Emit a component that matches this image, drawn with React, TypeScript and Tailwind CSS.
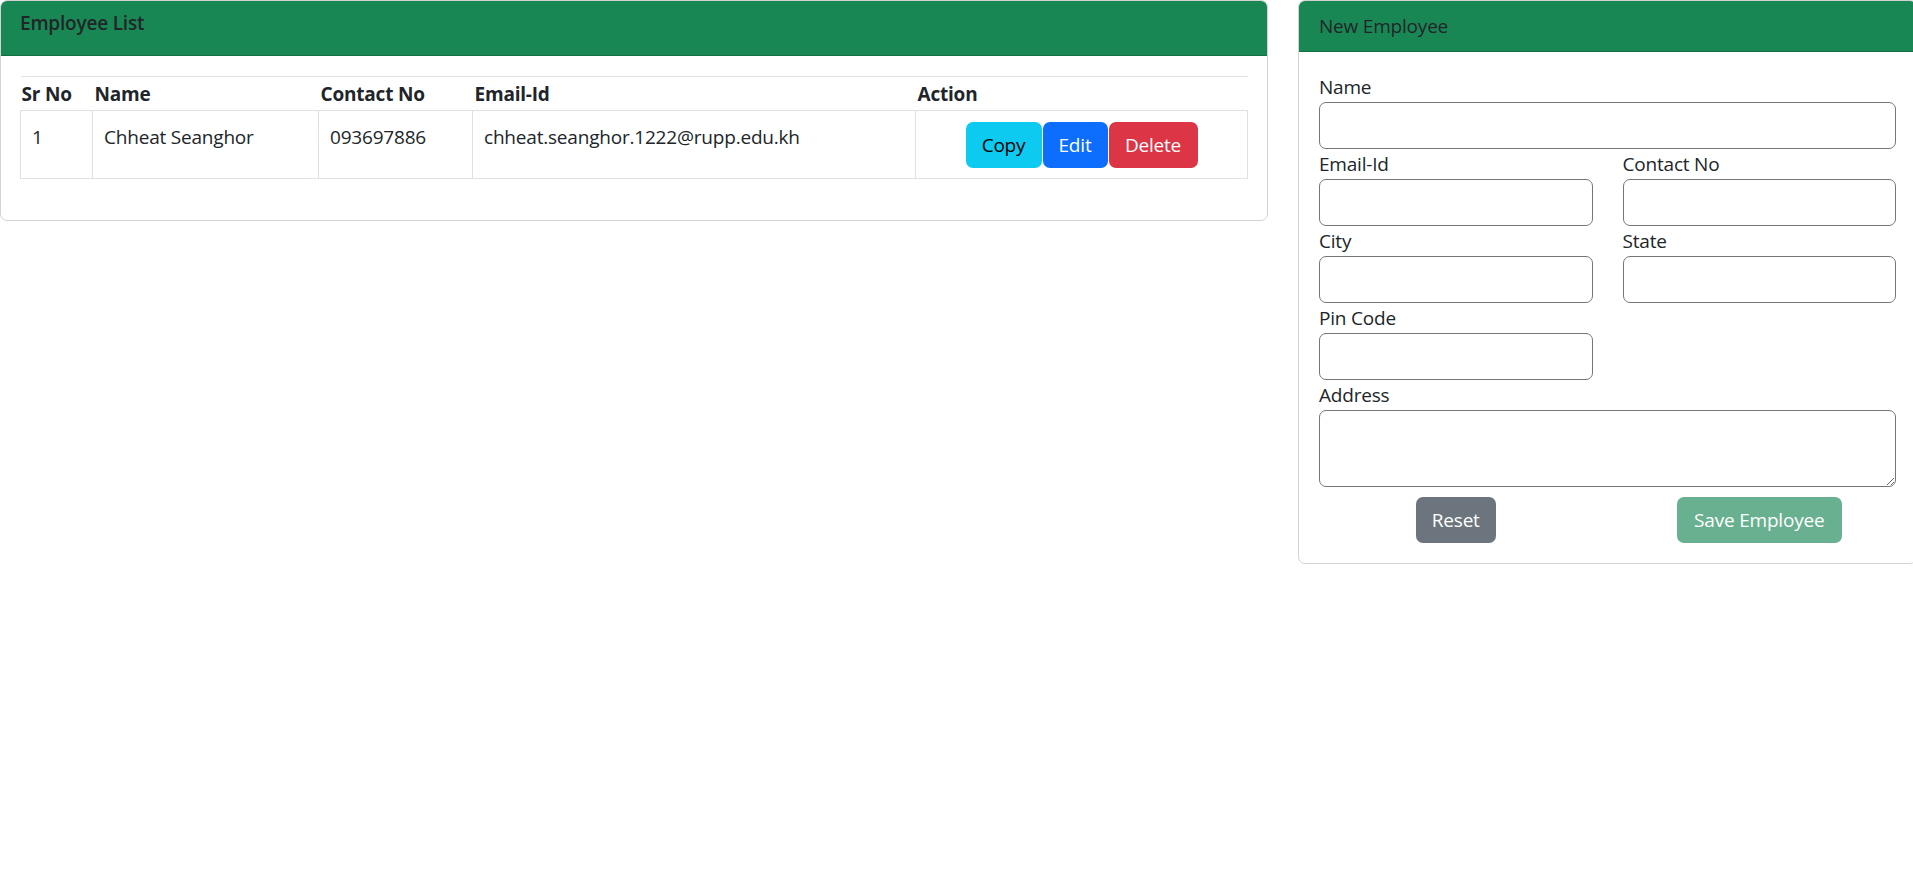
import React from "react";

function Field({ label, className = "" }: { label: string; className?: string }) {
  return (
    <div className={className}>
      <label className="block h-[30px] leading-[30px]">{label}</label>
      <input
        type="text"
        className="block w-full h-[47px] rounded-[7px] border border-[#767676] bg-white px-[10px] outline-none"
      />
    </div>
  );
}

export default function App() {
  return (
    <div className="w-[1913px] min-h-[878px] overflow-hidden bg-white text-[#212529] text-[19px] tracking-[-0.2px] leading-[30px] font-['Open_Sans',sans-serif]">
      <div className="flex items-start w-[2000px]">
        {/* Employee List card */}
        <div className="w-[1268px] shrink-0 rounded-[7px] border border-[#d3d3d3] overflow-hidden">
          <div className="bg-[#198754] border-b border-[#14703f] px-[19px] pt-[10px] pb-[10px]">
            <h6 className="text-[19px] leading-[24px] mb-[10px] font-semibold text-[#212529]">Employee List</h6>
          </div>
          <div className="pl-[19px] pr-[20px] pt-[20px] pb-[21px]">
            <table className="w-[1227px] table-fixed border-collapse mb-[20px]">
              <colgroup>
                <col className="w-[72px]" />
                <col className="w-[226px]" />
                <col className="w-[154px]" />
                <col className="w-[443px]" />
                <col className="w-[332px]" />
              </colgroup>
              <thead>
                <tr className="border-t border-b border-[#dee2e6]">
                  <th className="text-left font-bold px-[1px] pt-[2px] pb-[1px]">Sr No</th>
                  <th className="text-left font-bold px-[2px] pt-[2px] pb-[1px]">Name</th>
                  <th className="text-left font-bold px-[2px] pt-[2px] pb-[1px]">Contact No</th>
                  <th className="text-left font-bold px-[2px] pt-[2px] pb-[1px]">Email-Id</th>
                  <th className="text-left font-bold px-[2px] pt-[2px] pb-[1px]">Action</th>
                </tr>
              </thead>
              <tbody>
                <tr>
                  <td className="border border-[#dee2e6] px-[11px] pt-[11px] pb-[10px] align-top">1</td>
                  <td className="border border-[#dee2e6] px-[11px] pt-[11px] pb-[10px] align-top">Chheat Seanghor</td>
                  <td className="border border-[#dee2e6] px-[11px] pt-[11px] pb-[10px] align-top">093697886</td>
                  <td className="border border-[#dee2e6] px-[11px] pt-[11px] pb-[10px] align-top">chheat.seanghor.1222@rupp.edu.kh</td>
                  <td className="border border-[#dee2e6] px-[10px] pt-[11px] pb-[10px] align-top">
                    <div className="flex justify-center gap-[1px]">
                      <button className="w-[76px] h-[46px] rounded-[7px] bg-[#0dcaf0] text-black">Copy</button>
                      <button className="w-[65px] h-[46px] rounded-[7px] bg-[#0d6efd] text-white">Edit</button>
                      <button className="w-[89px] h-[46px] rounded-[7px] bg-[#dc3545] text-white">Delete</button>
                    </div>
                  </td>
                </tr>
              </tbody>
            </table>
          </div>
        </div>

        {/* New Employee card */}
        <div className="w-[619px] shrink-0 ml-[30px] rounded-[7px] border border-[#d3d3d3] overflow-hidden">
          <div className="bg-[#198754] border-b border-[#14703f] px-[20px] pt-[10px] pb-[10px] leading-[30px]">New Employee</div>
          <div className="p-[20px]">
            <Field label="Name" />
            <div className="grid grid-cols-2 gap-x-[30px]">
              <Field label="Email-Id" />
              <Field label="Contact No" />
              <Field label="City" />
              <Field label="State" />
              <Field label="Pin Code" />
            </div>
            <div>
              <label className="block h-[30px] leading-[30px]">Address</label>
              <textarea className="block w-full h-[77px] rounded-[7px] border border-[#767676] bg-white px-[10px] outline-none" />
            </div>
            <div className="grid grid-cols-2 gap-x-[30px] mt-[10px]">
              <div className="flex justify-center">
                <button className="w-[80px] h-[46px] rounded-[7px] bg-[#6c757d] text-white">Reset</button>
              </div>
              <div className="flex justify-center">
                <button className="w-[165px] h-[46px] rounded-[7px] bg-[#198754] opacity-[0.65] text-white">Save Employee</button>
              </div>
            </div>
          </div>
        </div>
      </div>
    </div>
  );
}
